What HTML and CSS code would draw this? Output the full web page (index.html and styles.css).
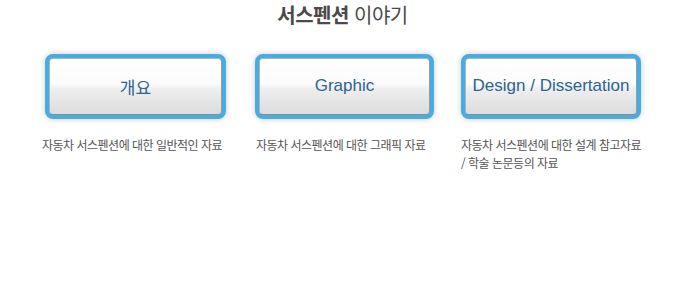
FILE: index.html
```html
<!DOCTYPE html>
<html lang="ko">
<head>
<meta charset="utf-8">
<link rel="stylesheet" href="styles.css">
</head>
<body>
<div class="page">
  <h1 class="title"><b>서스펜션</b> 이야기</h1>
  <div class="cols">
    <div class="col">
      <a class="btn"><span>개요</span></a>
      <p class="desc">자동차 서스펜션에 대한 일반적인 자료</p>
    </div>
    <div class="col">
      <a class="btn"><span>Graphic</span></a>
      <p class="desc">자동차 서스펜션에 대한 그래픽 자료</p>
    </div>
    <div class="col">
      <a class="btn"><span>Design / Dissertation</span></a>
      <p class="desc">자동차 서스펜션에 대한 설계 참고자료<br>/ 학술 논문등의 자료</p>
    </div>
  </div>
</div>
</body>
</html>
```
FILE: styles.css
```css
html, body {
  margin: 0;
  padding: 0;
  background: #ffffff;
}
.page {
  width: 685px;
  height: 300px;
  font-family: "Noto Sans CJK KR", "Noto Sans", sans-serif;
}
.title {
  margin: 0;
  line-height: 29px;
  text-align: center;
  font-size: 20px;
  font-weight: 400;
  color: #4a4a4a;
  letter-spacing: -0.5px;
}
.title b {
  font-weight: 700;
  color: #4a4a4a;
}
.cols {
  display: grid;
  grid-template-columns: 213px 206px 200px;
  padding-left: 42px;
  padding-top: 25px;
}
.col {
  display: flex;
  flex-direction: column;
}
.btn {
  box-sizing: border-box;
  width: 181px;
  height: 65px;
  border: 4px solid #45ade6;
  border-radius: 8px;
  box-shadow: 0 0 5px 1px rgba(0, 0, 0, 0.16);
  background: #45ade6;
  display: block;
}
.btn span {
  box-sizing: border-box;
  display: flex;
  align-items: center;
  justify-content: center;
  height: 100%;
  border: 1px solid #b4b4b4;
  border-bottom-color: #8c8c8c;
  border-right-color: #9a9a9a;
  border-radius: 4px;
  background: linear-gradient(to bottom, #ffffff 0%, #fbfbfb 45%, #eeeeee 55%, #dcdcdc 100%);
  font-family: "Liberation Sans", "Noto Sans CJK KR", sans-serif;
  font-size: 17px;
  color: #2a6494;
  padding-bottom: 1px;
}
.col:nth-child(1) .btn { margin-left: 3px; }
.col:nth-child(2) .btn { width: 179px; }
.col:nth-child(3) .btn { width: 180px; }
.desc {
  margin: 17px 0 0 0;
  font-size: 12px;
  line-height: 18px;
  color: #555555;
  letter-spacing: -0.5px;
}
.col:nth-child(2) .desc { margin-left: 1px; }
```
